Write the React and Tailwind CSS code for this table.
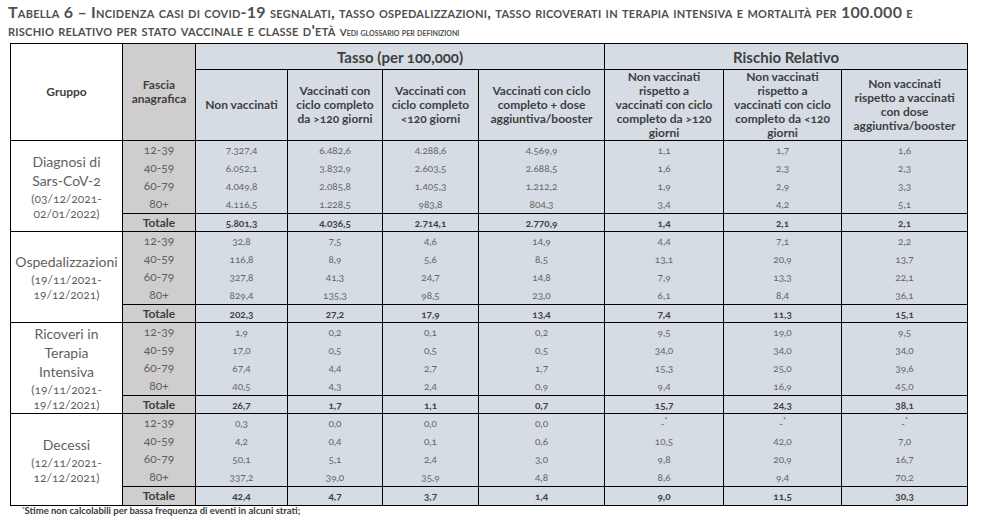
import React from 'react';

const groups = [
    {
        name: ['Diagnosi di', 'Sars-CoV-2'],
        dates: ['(03/12/2021-', '02/01/2022)'],
        rows: [
            ['12-39', '7.327,4', '6.482,6', '4.288,6', '4.569,9', '1,1', '1,7', '1,6'],
            ['40-59', '6.052,1', '3.832,9', '2.603,5', '2.688,5', '1,6', '2,3', '2,3'],
            ['60-79', '4.049,8', '2.085,8', '1.405,3', '1.212,2', '1,9', '2,9', '3,3'],
            ['80+', '4.116,5', '1.228,5', '983,8', '804,3', '3,4', '4,2', '5,1'],
        ],
        total: ['5.801,3', '4.036,5', '2.714,1', '2.770,9', '1,4', '2,1', '2,1'],
    },
    {
        name: ['Ospedalizzazioni'],
        dates: ['(19/11/2021-', '19/12/2021)'],
        rows: [
            ['12-39', '32,8', '7,5', '4,6', '14,9', '4,4', '7,1', '2,2'],
            ['40-59', '116,8', '8,9', '5,6', '8,5', '13,1', '20,9', '13,7'],
            ['60-79', '327,8', '41,3', '24,7', '14,8', '7,9', '13,3', '22,1'],
            ['80+', '829,4', '135,3', '98,5', '23,0', '6,1', '8,4', '36,1'],
        ],
        total: ['202,3', '27,2', '17,9', '13,4', '7,4', '11,3', '15,1'],
    },
    {
        name: ['Ricoveri in', 'Terapia', 'Intensiva'],
        dates: ['(19/11/2021-', '19/12/2021)'],
        rows: [
            ['12-39', '1,9', '0,2', '0,1', '0,2', '9,5', '19,0', '9,5'],
            ['40-59', '17,0', '0,5', '0,5', '0,5', '34,0', '34,0', '34,0'],
            ['60-79', '67,4', '4,4', '2,7', '1,7', '15,3', '25,0', '39,6'],
            ['80+', '40,5', '4,3', '2,4', '0,9', '9,4', '16,9', '45,0'],
        ],
        total: ['26,7', '1,7', '1,1', '0,7', '15,7', '24,3', '38,1'],
    },
    {
        name: ['Decessi'],
        dates: ['(12/11/2021-', '12/12/2021)'],
        rows: [
            ['12-39', '0,3', '0,0', '0,0', '0,0', '-*', '-*', '-*'],
            ['40-59', '4,2', '0,4', '0,1', '0,6', '10,5', '42,0', '7,0'],
            ['60-79', '50,1', '5,1', '2,4', '3,0', '9,8', '20,9', '16,7'],
            ['80+', '337,2', '39,0', '35,9', '4,8', '8,6', '9,4', '70,2'],
        ],
        total: ['42,4', '4,7', '3,7', '1,4', '9,0', '11,5', '30,3'],
    },
];

const subHeaders = [
    ['Non vaccinati'],
    ['Vaccinati con', 'ciclo completo', 'da >120 giorni'],
    ['Vaccinati con', 'ciclo completo', '<120 giorni'],
    ['Vaccinati con ciclo', 'completo + dose', 'aggiuntiva/booster'],
    ['Non vaccinati', 'rispetto a', 'vaccinati con ciclo', 'completo da >120', 'giorni'],
    ['Non vaccinati', 'rispetto a', 'vaccinati con ciclo', 'completo da <120', 'giorni'],
    ['Non vaccinati', 'rispetto a vaccinati', 'con dose', 'aggiuntiva/booster'],
];

const Value = ({ v }) =>
    v === '-*' ? (
        <span>
            -<sup className="text-[7px]">*</sup>
        </span>
    ) : (
        v
    );

const Lines = ({ lines }) => lines.map((l, i) => <div key={i}>{l}</div>);

const App = () => {
    return (
        <div className="w-[986px] h-[518px] bg-white font-['Lato','Open_Sans',sans-serif] oldstyle-nums">
            <div className="pl-[8px] pt-[3px] text-[#4f4f4f] font-bold [font-variant:small-caps] text-[16px] leading-[18px] tracking-[0.25px]">
                <div className="whitespace-nowrap">
                    Tabella 6 – Incidenza casi di covid-19 segnalati, tasso ospedalizzazioni, tasso ricoverati in terapia
                    intensiva e mortalità per 100.000 e
                </div>
                <div className="whitespace-nowrap">
                    rischio relativo per stato vaccinale e classe d'età{' '}
                    <span className="text-[10px] tracking-normal">Vedi glossario per definizioni</span>
                </div>
            </div>

            <table className="ml-[10px] mt-[2px] table-fixed border-collapse w-[957px] text-center">
                <colgroup>
                    <col className="w-[112px]" />
                    <col className="w-[73px]" />
                    <col className="w-[92px]" />
                    <col className="w-[95px]" />
                    <col className="w-[96px]" />
                    <col className="w-[126px]" />
                    <col className="w-[119px]" />
                    <col className="w-[118px]" />
                    <col className="w-[126px]" />
                </colgroup>
                <thead className="text-[#3f3f3f] font-bold text-[12px] leading-[14px]">
                    <tr className="h-[26px]">
                        <th rowSpan={2} className="border border-black bg-white">
                            Gruppo
                        </th>
                        <th rowSpan={2} className="border border-black bg-[#d0cdce]">
                            Fascia
                            <br />
                            anagrafica
                        </th>
                        <th colSpan={4} className="border border-black bg-[#d6dce4] text-[15px]">
                            Tasso (per 100,000)
                        </th>
                        <th colSpan={3} className="border border-black bg-[#d6dce4] text-[15px]">
                            Rischio Relativo
                        </th>
                    </tr>
                    <tr className="h-[71px]">
                        {subHeaders.map((h, i) => (
                            <th key={i} className="border border-black bg-[#d6dce4] px-[2px]">
                                <Lines lines={h} />
                            </th>
                        ))}
                    </tr>
                </thead>
                <tbody>
                    {groups.map((g, gi) => (
                        <React.Fragment key={gi}>
                            {g.rows.map((r, ri) => (
                                <tr key={ri} className={ri === 3 ? 'h-[19px]' : 'h-[18px]'}>
                                    {ri === 0 && (
                                        <td rowSpan={5} className="border border-black bg-white text-[#5f5f5f] align-middle">
                                            <div className="text-[14px] leading-[19px]">
                                                <Lines lines={g.name} />
                                            </div>
                                            <div className="text-[12px] leading-[15px] mt-[1px]">
                                                <Lines lines={g.dates} />
                                            </div>
                                        </td>
                                    )}
                                    <td className="border-x border-black bg-[#d0cdce] text-[12px] text-[#5f5f5f] leading-[14px]">
                                        {r[0]}
                                    </td>
                                    {r.slice(1).map((v, vi) => (
                                        <td
                                            key={vi}
                                            className="border-x border-black bg-[#d6dce4] text-[10px] text-[#646464] leading-[12px]"
                                        >
                                            <Value v={v} />
                                        </td>
                                    ))}
                                </tr>
                            ))}
                            <tr className={gi === 3 ? 'h-[19px]' : 'h-[18px]'}>
                                <td className="border border-black bg-[#d0cdce] text-[12px] font-bold text-[#3f3f3f] leading-[14px]">
                                    Totale
                                </td>
                                {g.total.map((v, vi) => (
                                    <td
                                        key={vi}
                                        className="border border-black bg-[#d6dce4] text-[10px] font-bold text-[#404040] leading-[12px]"
                                    >
                                        {v}
                                    </td>
                                ))}
                            </tr>
                        </React.Fragment>
                    ))}
                </tbody>
            </table>

            <div className="pl-[22px] text-[9.5px] leading-[10px] font-bold text-[#3a3a3a]">
                <sup className="text-[6px]">*</sup>Stime non calcolabili per bassa frequenza di eventi in alcuni strati;
            </div>
        </div>
    );
};

export default App;
